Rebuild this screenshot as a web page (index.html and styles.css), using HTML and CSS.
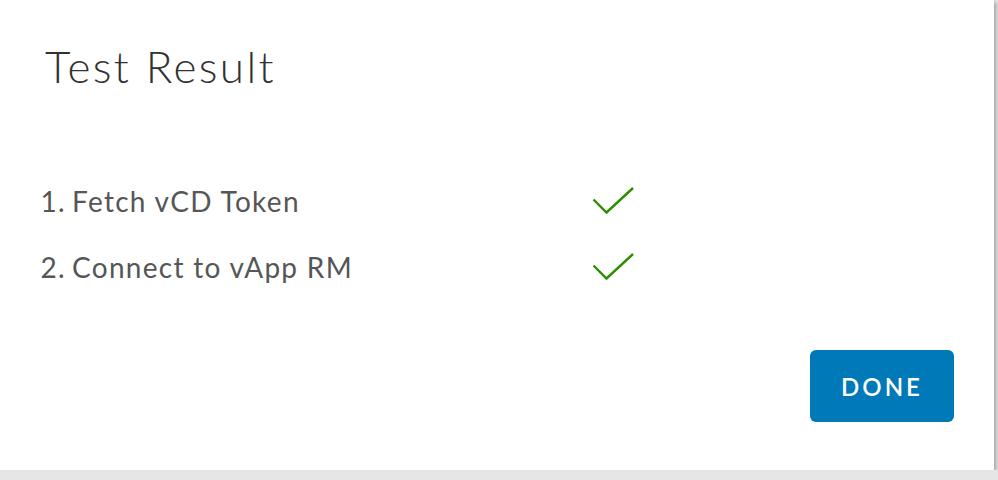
FILE: index.html
```html
<!DOCTYPE html>
<html lang="en">
<head>
    <meta charset="UTF-8">
    <title>Test Result</title>
    <link rel="stylesheet" href="styles.css">
</head>
<body>
    <div class="modal">
        <!-- Title -->
        <h3 class="modal-title">Test Result</h3>

        <!-- Steps -->
        <ol class="steps">
            <li class="step">
                <span class="step-num">1.</span>
                <span class="step-name">Fetch vCD Token</span>
                <svg class="check" viewBox="0 0 42 28"><polyline points="1.5,12.5 14.5,25.5 41,1" /></svg>
            </li>
            <li class="step">
                <span class="step-num">2.</span>
                <span class="step-name">Connect to vApp RM</span>
                <svg class="check" viewBox="0 0 42 28"><polyline points="1.5,12.5 14.5,25.5 41,1" /></svg>
            </li>
        </ol>

        <div class="modal-footer">
            <button class="btn-primary">DONE</button>
        </div>
    </div>
</body>
</html>
```

FILE: styles.css
```css
:root {
    --primary: #0079b8;
    --text-dark: #313131;
    --text: #565656;
    --success: #2c8e00;
}

body {
    margin: 0;
    background: #e6e6e6;
    font-family: Lato, "Open Sans", sans-serif;
}

.modal {
    width: 994px;
    height: 470px;
    box-sizing: border-box;
    padding: 40px 40px 48px 45px;
    background: #fff;
    box-shadow: 2px 2px 4px rgba(0, 0, 0, 0.3);
    display: flex;
    flex-direction: column;
}

.modal-title {
    margin: 0;
    font-size: 44px;
    line-height: 1.2;
    font-weight: 300;
    letter-spacing: 2.4px;
    color: var(--text-dark);
}

/* Steps list */
.steps {
    list-style: none;
    margin: 75px 0 0 -45px;
    padding: 0;
}

.step {
    display: grid;
    grid-template-columns: 71px 520px 42px;
    align-items: center;
    height: 66px;
    font-size: 28px;
    letter-spacing: 1.3px;
    color: var(--text);
}

.step-num {
    text-align: right;
    padding-right: 5px;
}

.step-name {
    padding-left: 1px;
}

.check {
    width: 42px;
    height: 28px;
    margin-left: 1px;
    fill: none;
    stroke: var(--success);
    stroke-width: 2.4;
}

/* Footer */
.modal-footer {
    margin-top: auto;
    display: flex;
    justify-content: flex-end;
}

.btn-primary {
    width: 144px;
    height: 72px;
    border: none;
    border-radius: 6px;
    background: var(--primary);
    color: #fff;
    font-family: Lato, "Open Sans", sans-serif;
    font-size: 24px;
    font-weight: 600;
    letter-spacing: 3px;
    cursor: pointer;
}
```
